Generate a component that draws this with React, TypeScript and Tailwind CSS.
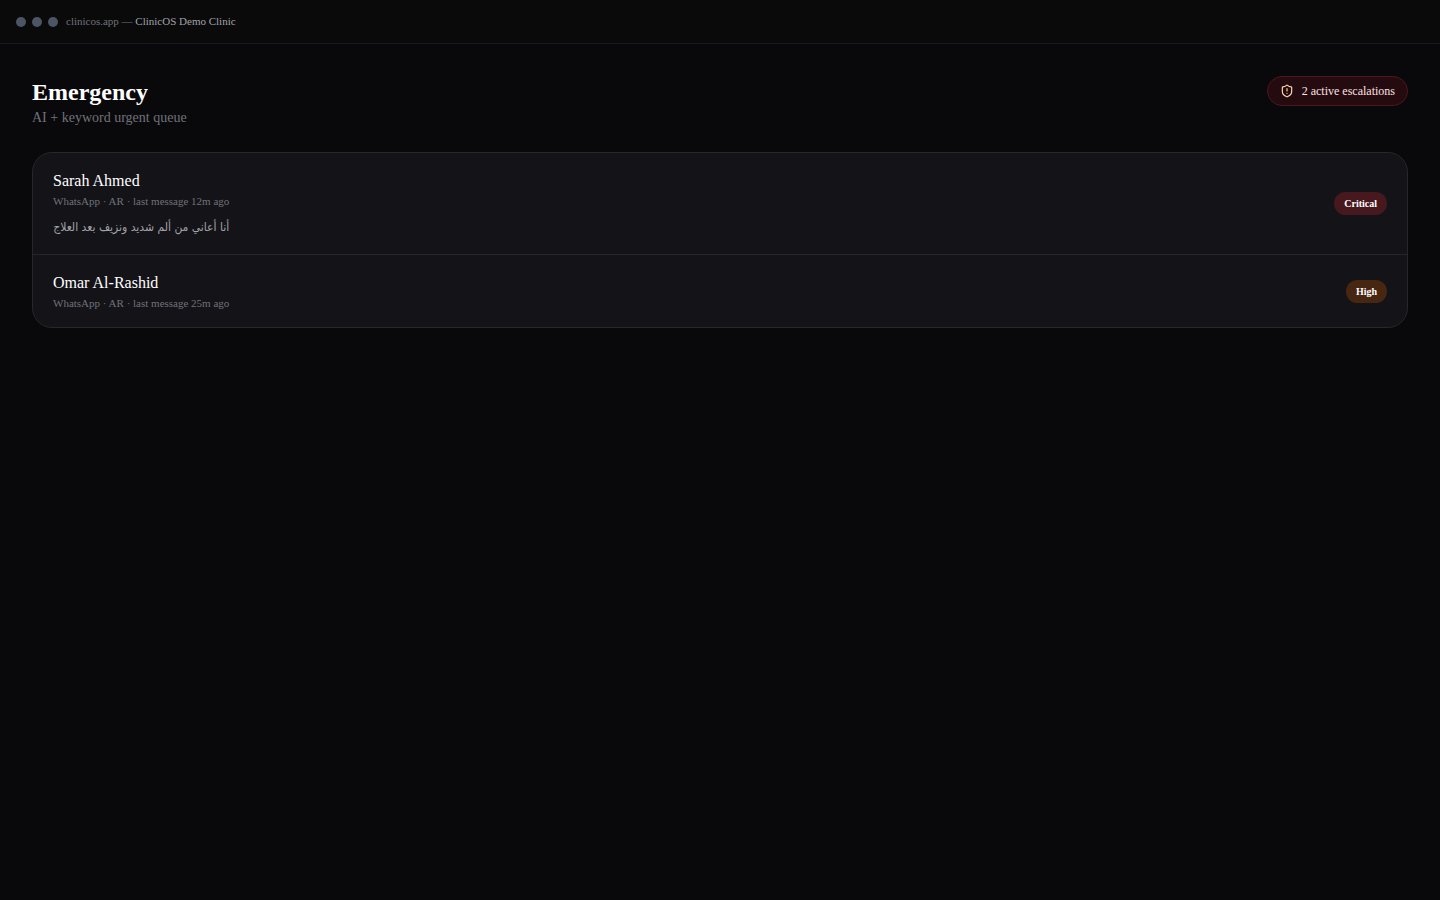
import { ShieldAlert } from "lucide-react";

type Escalation = {
  name: string;
  meta: string;
  message?: string;
  level: "Critical" | "High";
};

const escalations: Escalation[] = [
  {
    name: "Sarah Ahmed",
    meta: "WhatsApp · AR · last message 12m ago",
    message: "أنا أعاني من ألم شديد ونزيف بعد العلاج",
    level: "Critical",
  },
  {
    name: "Omar Al-Rashid",
    meta: "WhatsApp · AR · last message 25m ago",
    level: "High",
  },
];

const levelStyles = {
  Critical: "bg-[#47181d]",
  High: "bg-[#472612]",
};

function WindowBar() {
  return (
    <header className="flex items-center gap-2 border-b border-[#19191c] bg-[#0a0a0a] px-4 py-3.5">
      <div className="flex gap-1.5" aria-hidden="true">
        <span className="size-2.5 rounded-full bg-[#4b5563]" />
        <span className="size-2.5 rounded-full bg-[#4b5563]" />
        <span className="size-2.5 rounded-full bg-[#4b5563]" />
      </div>
      <p className="text-[11px] leading-[15px] text-[#71717a]">
        clinicos.app — <span className="text-[#a1a1aa]">ClinicOS Demo Clinic</span>
      </p>
    </header>
  );
}

function EscalationRow({ name, meta, message, level }: Escalation) {
  return (
    <li className="flex items-center justify-between gap-4 px-5 py-4">
      <div>
        <h2 className="text-base leading-6 text-white">{name}</h2>
        <p className="text-[11px] leading-4 text-[#71717a]">{meta}</p>
        {message && (
          <p
            dir="rtl"
            lang="ar"
            className="mt-2 font-['DejaVu_Sans_Condensed','DejaVu_Sans',sans-serif] text-xs leading-[21px] text-[#a1a1aa]"
          >
            {message}
          </p>
        )}
      </div>
      <span
        className={`rounded-full px-2.5 py-1 text-[10px] leading-[15px] font-bold text-white ${levelStyles[level]}`}
      >
        {level}
      </span>
    </li>
  );
}

export default function App() {
  return (
    <div className="min-h-screen bg-[#09090b] font-['Liberation_Serif','DejaVu_Sans',serif]">
      <WindowBar />
      <main className="p-8">
        <div className="flex items-start justify-between">
          <div>
            <h1 className="text-2xl leading-8 font-bold text-white">Emergency</h1>
            <p className="text-sm leading-5 text-[#71717a]">AI + keyword urgent queue</p>
          </div>
          <div className="flex items-center gap-2 rounded-full border border-[#52151b] bg-[#240b0f] px-3 py-1.5 text-xs leading-4 text-[#fee2e2]">
            <ShieldAlert className="size-3.5 text-[#fed7aa]" aria-hidden="true" />
            2 active escalations
          </div>
        </div>
        <ul className="mt-6 divide-y divide-[#27272a] rounded-[20px] border border-[#27272a] bg-[#141418]">
          {escalations.map((item) => (
            <EscalationRow key={item.name} {...item} />
          ))}
        </ul>
      </main>
    </div>
  );
}
